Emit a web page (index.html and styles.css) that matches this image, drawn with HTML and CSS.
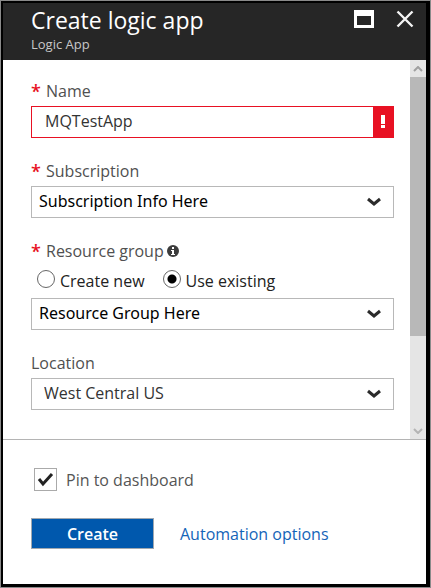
FILE: index.html
```
<!DOCTYPE html>
<html lang="en">
<head>
<meta charset="utf-8">
<title>Create logic app</title>
<meta name="viewport" content="width=device-width, initial-scale=1">
<link rel="stylesheet" href="styles.css">
</head>
<body>
<main class="blade">
  <header class="blade-header">
    <div class="heading">
      <h1 class="title">Create logic app</h1>
      <p class="subtitle">Logic App</p>
    </div>
    <div class="window-actions">
      <button class="icon-button" type="button" aria-label="Maximize">
        <svg width="20" height="18" viewBox="0 0 20 18"><path fill="#fff" fill-rule="evenodd" d="M0 0h20v18H0zM3 6v9h14V6z"/></svg>
      </button>
      <button class="icon-button" type="button" aria-label="Close">
        <svg width="18" height="18" viewBox="0 0 18 18"><path fill="none" stroke="#f4f4f4" stroke-width="2.4" d="M1.500 1.500l15 15M16.500 1.500l-15 15"/></svg>
      </button>
    </div>
  </header>

  <form class="form">
    <div class="scroll-area">
      <div class="fields">
        <div class="field">
          <label class="label" for="name"><span class="required">*</span>Name</label>
          <div class="text-box">
            <input class="text-input" id="name" type="text" value="MQTestApp">
            <span class="error-mark">
              <svg width="6" height="14" viewBox="0 0 6 14"><path fill="#fff" d="M1 0h4v9H1zM1 10h4v3H1z"/></svg>
            </span>
          </div>
        </div>

        <div class="field">
          <label class="label" for="subscription"><span class="required">*</span>Subscription</label>
          <div class="select-box">
            <select class="select strong" id="subscription"><option>Subscription Info Here</option></select>
            <svg class="chevron" width="14" height="10" viewBox="0 0 14 10"><path fill="none" stroke="#2b2b2b" stroke-width="3" d="M1 2l6 5 6-5"/></svg>
          </div>
        </div>

        <div class="field">
          <label class="label" for="group"><span class="required">*</span>Resource group
            <svg class="info" width="12" height="12" viewBox="0 0 12 12"><circle cx="6" cy="6" r="6" fill="#3c3c3c"/><path fill="#fff" d="M5 2h2v2H5zM4 5h3v4h1v1H4V9h1V6H4z"/></svg>
          </label>
          <div class="radios">
            <label class="radio-label"><input class="radio" type="radio" name="mode">Create new</label>
            <label class="radio-label"><input class="radio" type="radio" name="mode" checked>Use existing</label>
          </div>
          <div class="select-box">
            <select class="select strong" id="group"><option>Resource Group Here</option></select>
            <svg class="chevron" width="14" height="10" viewBox="0 0 14 10"><path fill="none" stroke="#2b2b2b" stroke-width="3" d="M1 2l6 5 6-5"/></svg>
          </div>
        </div>

        <div class="field">
          <label class="label" for="location">Location</label>
          <div class="select-box">
            <select class="select indented" id="location"><option>West Central US</option></select>
            <svg class="chevron" width="14" height="10" viewBox="0 0 14 10"><path fill="none" stroke="#2b2b2b" stroke-width="3" d="M1 2l6 5 6-5"/></svg>
          </div>
        </div>
      </div>

      <div class="scrollbar" aria-hidden="true">
        <span class="scroll-step"><svg width="10" height="6" viewBox="0 0 10 6"><path fill="none" stroke="#a0a0a0" stroke-width="2" d="M1 5l4-4 4 4"/></svg></span>
        <span class="scroll-track"><span class="scroll-thumb"></span></span>
        <span class="scroll-step"><svg width="10" height="6" viewBox="0 0 10 6"><path fill="none" stroke="#b4b4b4" stroke-width="2" d="M1 1l4 4 4-4"/></svg></span>
      </div>
    </div>

    <footer class="footer">
      <label class="pin"><input class="checkbox" type="checkbox" checked>
        <svg class="tick" width="17" height="15" viewBox="0 0 17 15"><path fill="none" stroke="#222" stroke-width="3" d="M2 7l4 5L15 2"/></svg>
        Pin to dashboard</label>
      <div class="actions">
        <button class="create" type="button">Create</button>
        <a class="link" href="#">Automation options</a>
      </div>
    </footer>
  </form>
</main>
</body>
</html>
```
FILE: styles.css
```
* {
  box-sizing: border-box;
}

body {
  margin: 0;
  background: #8a8a8a;
  font: 16px/20px "Open Sans", "Noto Sans", sans-serif;
  color: #222;
}

.blade {
  display: flex;
  flex-direction: column;
  min-height: calc(100vh - 2px);
  margin: 1px;
  border: 2px solid #000;
  border-right-width: 4px;
  border-bottom-width: 3px;
  background: #fff;
}

.blade-header {
  display: flex;
  justify-content: space-between;
  padding: 1px 12px 7px 28px;
  background: #262626;
  color: #fff;
}

.title {
  margin: 0;
  font-size: 23px;
  line-height: 32px;
  font-weight: 400;
}

.subtitle {
  margin: 0;
  font-size: 13px;
  line-height: 17px;
  color: #c8c8c8;
}

.window-actions {
  display: flex;
  align-items: flex-start;
  gap: 22px;
  padding-top: 6px;
}

.icon-button {
  display: flex;
  padding: 0;
  border: 0;
  background: none;
}

.form {
  display: flex;
  flex: 1;
  flex-direction: column;
}

.scroll-area {
  display: flex;
  border-bottom: 1px solid #b4b4b4;
}

.fields {
  display: flex;
  flex: 1;
  flex-direction: column;
  gap: 23px;
  padding: 21px 16px 29px 28px;
}

.field {
  display: flex;
  flex-direction: column;
}

.label {
  display: flex;
  align-items: center;
  margin-bottom: 5px;
  color: #505050;
}

.required {
  width: 15px;
  font-size: 18px;
  font-weight: 600;
  color: #e81123;
}

.info {
  margin-left: 3px;
}

.text-box {
  display: flex;
  height: 32px;
  border: 1px solid #e81123;
}

.text-input {
  flex: 1;
  min-width: 0;
  padding: 0 13px 2px;
  border: 0;
  background: #fff;
  font: inherit;
  color: #333;
}

.error-mark {
  display: flex;
  align-items: center;
  justify-content: center;
  width: 20px;
  background: #e81123;
}

.select-box {
  position: relative;
}

.select {
  display: block;
  width: 100%;
  height: 32px;
  padding: 0 40px 2px 7px;
  border: 1px solid #b8b8b8;
  border-radius: 0;
  appearance: none;
  background: #fff;
  font: inherit;
  color: #333;
}

.strong {
  font-family: "Noto Sans", "Open Sans", sans-serif;
  color: #000;
}

.indented {
  padding-left: 12px;
}

.chevron {
  position: absolute;
  top: 11px;
  right: 13px;
  pointer-events: none;
}

.radios {
  display: flex;
  gap: 18px;
  margin-bottom: 5px;
  padding: 3px 0 0 6px;
}

.radio-label {
  display: flex;
  align-items: center;
  gap: 5px;
  line-height: 24px;
}

.radio {
  width: 18px;
  height: 18px;
  margin: 0 0 4px;
  border: 1px solid #666;
  border-radius: 50%;
  appearance: none;
  background: #fff;
}

.radio:checked {
  background: radial-gradient(circle, #000 4px, #fff 5px);
}

.scrollbar {
  display: flex;
  flex-direction: column;
  width: 16px;
  background: #e5e5e5;
}

.scroll-step {
  display: flex;
  align-items: center;
  justify-content: center;
  height: 17px;
}

.scroll-track {
  flex: 1;
}

.scroll-thumb {
  display: block;
  height: 75%;
  background: #b8b8b8;
}

.footer {
  padding: 28px 31px 30px;
}

.pin {
  display: flex;
  position: relative;
  align-items: center;
  gap: 9px;
  color: #555;
}

.checkbox {
  width: 23px;
  height: 23px;
  margin: 0;
  border: 1px solid #aaa;
  appearance: none;
  background: #fff;
}

.tick {
  position: absolute;
  top: 4px;
  left: 3px;
  visibility: hidden;
  pointer-events: none;
}

.checkbox:checked + .tick {
  visibility: visible;
}

.actions {
  display: flex;
  align-items: center;
  gap: 26px;
  margin-top: 27px;
  margin-left: -3px;
}

.create {
  width: 123px;
  height: 31px;
  padding: 0;
  border: 1px solid #a0a8b0;
  background: #0058ad;
  font: inherit;
  font-weight: 600;
  color: #fff;
}

.link {
  color: #1464b8;
  text-decoration: none;
}
```
